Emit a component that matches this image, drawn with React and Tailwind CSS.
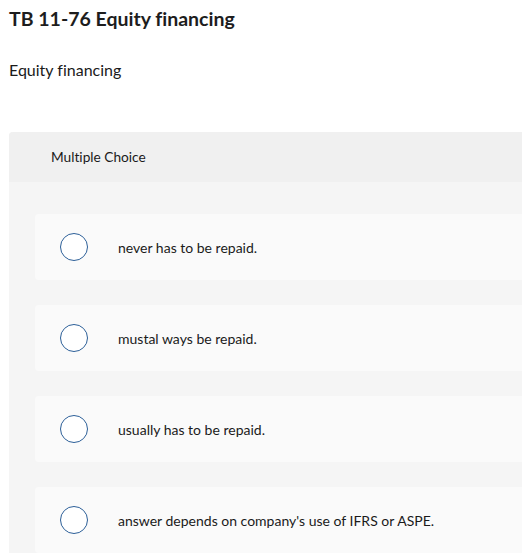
export default function App() {
  const options = [
    "never has to be repaid.",
    "mustal ways be repaid.",
    "usually has to be repaid.",
    "answer depends on company's use of IFRS or ASPE.",
  ];
  return (
    <div className="w-[522px] h-[560px] overflow-hidden bg-white text-[#1a1a1a] [font-variant-ligatures:none]" style={{ fontFamily: "Lato, 'Open Sans', sans-serif" }}>
      <h1 className="pl-[9px] pt-[7px] text-[19.5px] leading-[24px] font-bold text-[#1d1d1d]">TB 11-76 Equity financing</h1>
      <p className="pl-[9px] mt-[29px] text-[16px] leading-[20px]">Equity financing</p>
      <div className="ml-[9px] mt-[52px] w-[560px] rounded-tl-[4px] bg-[#f5f5f5]">
        <div className="h-[50px] bg-[#f0f0f0] rounded-tl-[4px] flex items-center pl-[42px] text-[13.7px]">Multiple Choice</div>
        <div className="pt-[32px] pl-[26px] flex flex-col gap-[25px]">
          {options.map((o) => (
            <div key={o} className="h-[66px] bg-[#fafafa] rounded-l-[4px] flex items-center">
              <div className="ml-[25px] w-[28px] h-[28px] rounded-full border-[1.5px] border-[#2c5f98] bg-white shrink-0" />
              <span className="ml-[30px] text-[14px]">{o}</span>
            </div>
          ))}
        </div>
      </div>
    </div>
  );
}
